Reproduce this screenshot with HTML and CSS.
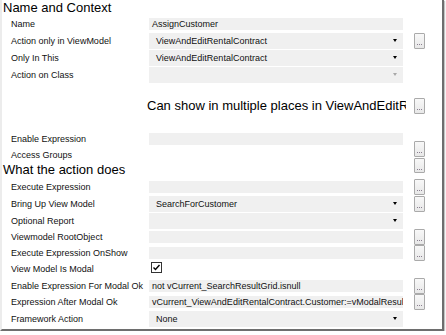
FILE: index.html
```html
<!DOCTYPE html>
<html>
<head>
<meta charset="utf-8">
<link rel="stylesheet" href="styles.css">
</head>
<body>
<div class="frame">
  <h2 class="heading h1">Name and Context</h2>
  <div class="row h16"><span class="lbl">Name</span><div class="field">AssignCustomer</div></div>
  <div class="row h17"><span class="lbl">Action only in ViewModel</span><div class="combo"><span>ViewAndEditRentalContract</span><i class="arrow"></i></div><span class="btn"></span></div>
  <div class="row h17"><span class="lbl">Only In This</span><div class="combo"><span>ViewAndEditRentalContract</span><i class="arrow"></i></div></div>
  <div class="row h17"><span class="lbl">Action on Class</span><div class="combo"><span></span><i class="arrow disabled"></i></div></div>
  <div class="row big"><span class="lbl"></span><div class="bigtext">Can show in multiple places in ViewAndEditRentalContract</div><span class="btn"></span></div>
  <div class="row h16 enable"><span class="lbl">Enable Expression</span><div class="field"></div><span class="btn low10"></span></div>
  <div class="row h15"><span class="lbl">Access Groups</span><div></div><span class="btn low11"></span></div>
  <h2 class="heading h2">What the action does</h2>
  <div class="row h16"><span class="lbl">Execute Expression</span><div class="field"></div><span class="btn"></span></div>
  <div class="row h17"><span class="lbl">Bring Up View Model</span><div class="combo"><span>SearchForCustomer</span><i class="arrow"></i></div><span class="btn"></span></div>
  <div class="row h17"><span class="lbl">Optional Report</span><div class="combo"><span></span><i class="arrow"></i></div></div>
  <div class="row h16"><span class="lbl">Viewmodel RootObject</span><div class="field"></div><span class="btn"></span></div>
  <div class="row h16"><span class="lbl">Execute Expression OnShow</span><div class="field"></div><span class="btn"></span></div>
  <div class="row h16"><span class="lbl">View Model Is Modal</span><div class="checkwrap"><svg class="check" width="11" height="11" viewBox="0 0 11 11"><rect x="0.5" y="0.5" width="10" height="10" fill="#fff" stroke="#333"/><path d="M2.5 5.5 L4.5 7.5 L8.5 3" fill="none" stroke="#000" stroke-width="1.4"/></svg></div></div>
  <div class="row h17"><span class="lbl">Enable Expression For Modal Ok</span><div class="field">not vCurrent_SearchResultGrid.isnull</div><span class="btn"></span></div>
  <div class="row h16"><span class="lbl">Expression After Modal Ok</span><div class="field">vCurrent_ViewAndEditRentalContract.Customer:=vModalResult</div><span class="btn"></span></div>
  <div class="row h17"><span class="lbl">Framework Action</span><div class="combo"><span>None</span><i class="arrow"></i></div></div>
</div>
</body>
</html>
```
FILE: styles.css
```css
html, body {
  margin: 0;
  padding: 0;
  background: #fff;
}
body {
  font-family: "Liberation Sans", Arial, sans-serif;
  color: #111;
}
.frame {
  width: 440px;
  height: 329px;
  border-left: 2px solid #ececec;
  border-right: 2px solid #6e6e6e;
  border-bottom: 2px solid #6e6e6e;
  box-shadow: 1px 1px 1px #c4c4c4;
  overflow: hidden;
  box-sizing: content-box;
}
.heading {
  margin: 0;
  padding-left: 1px;
  font-weight: normal;
  font-size: 13px;
  color: #000;
}
.heading.h1 { height: 16px; line-height: 16px; }
.heading.h2 { height: 15px; line-height: 15px; margin-bottom: 2px; }
.row {
  display: grid;
  grid-template-columns: 138px 254px 11px 11px;
  grid-template-rows: minmax(0, 1fr);
  column-gap: 0;
  padding-left: 9px;
  align-items: center;
  font-size: 9px;
}
.row > .btn { grid-column: 4; }
.h15 { height: 15px; }
.h16 { height: 16px; }
.h17 { height: 17px; }
.big { height: 18px; margin-top: 14px; }
.enable { margin-top: 16px; }
.lbl {
  white-space: nowrap;
  line-height: 12px;
}
.field {
  height: 12px;
  line-height: 12px;
  background: #f0f0f0;
  padding-left: 3px;
  white-space: nowrap;
  overflow: hidden;
  color: #111;
}
.combo {
  height: 16px;
  background: #f0f0f0;
  display: flex;
  align-items: center;
  justify-content: space-between;
  padding: 0 6px 0 7px;
  white-space: nowrap;
  overflow: hidden;
}
.arrow {
  width: 0;
  height: 0;
  border-left: 2.5px solid transparent;
  border-right: 2.5px solid transparent;
  border-top: 3px solid #000;
}
.arrow.disabled { border-top-color: #a8a8a8; }
.bigtext {
  grid-column: 2 / 4;
  margin-left: -2px;
  width: 259px;
  font-size: 13px;
  line-height: 18px;
  white-space: nowrap;
  overflow: hidden;
  color: #000;
}
.btn {
  box-sizing: border-box;
  width: 11px;
  height: 16px;
  border: 1px solid #aaaaaa;
  border-radius: 1px;
  background: linear-gradient(#f8f8f8, #e8e8e8);
  position: relative;
  display: block;
}
.btn::after {
  content: "";
  position: absolute;
  left: 2px;
  top: 10px;
  width: 1px;
  height: 1px;
  background: #8a7f90;
  box-shadow: 2px 0 #8a7f90, 4px 0 #8a7f90;
}
.low10 { align-self: start; margin-top: 10px; }
.low11 { align-self: start; margin-top: 11px; height: 15px; }
.checkwrap {
  align-self: start;
  margin-top: 1px;
  padding-left: 2px;
  height: 11px;
}
.check { display: block; }
```
